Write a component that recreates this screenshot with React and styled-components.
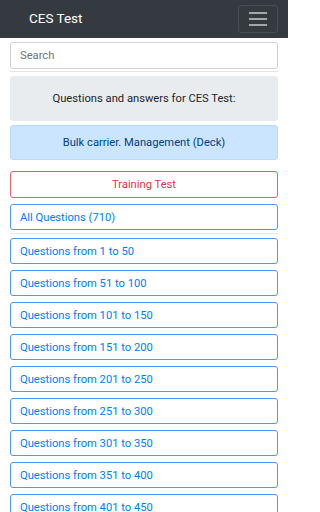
import React from 'react';
import styled, { createGlobalStyle } from 'styled-components';

const GlobalStyle = createGlobalStyle`
  html, body {
    margin: 0;
    padding: 0;
    background: #fff;
    font-family: Roboto, "Liberation Sans", sans-serif;
    color: #212529;
  }
  ::-webkit-scrollbar {
    display: none;
  }
`;

const Page = styled.div`
  width: 288px;
  overflow: hidden;
`;

const Navbar = styled.nav`
  display: flex;
  align-items: center;
  justify-content: space-between;
  height: 38px;
  padding: 0 10px 0 29px;
  background: #343a40;
`;

const Brand = styled.span`
  color: #fff;
  font-size: 13.5px;
  line-height: 1;
`;

const Toggler = styled.button`
  display: flex;
  flex-direction: column;
  justify-content: center;
  gap: 4.6px;
  align-items: center;
  width: 40px;
  height: 28px;
  padding: 0;
  background: transparent;
  border: 1px solid rgba(255, 255, 255, 0.1);
  border-radius: 3px;
  span {
    display: block;
    width: 18px;
    height: 1.4px;
    background: rgba(255, 255, 255, 0.55);
  }
`;

const Main = styled.main`
  display: flex;
  flex-direction: column;
  padding: 4px 10px 0;
`;

const SearchInput = styled.input`
  box-sizing: border-box;
  height: 27px;
  width: 100%;
  padding: 0 9px;
  border: 1px solid #ced4da;
  border-radius: 3px;
  font-family: inherit;
  font-size: 11.2px;
  color: #495057;
  &::placeholder {
    color: #6c757d;
  }
`;

const Rule = styled.hr`
  width: 100%;
  margin: ${p => p.$top}px 0 ${p => p.$bottom}px;
  border: 0;
  border-top: 1px solid rgba(0, 0, 0, 0.1);
`;

const Jumbo = styled.div`
  display: flex;
  align-items: center;
  justify-content: center;
  height: 45px;
  background: #e9ecef;
  border-radius: 3px;
  font-size: 11.2px;
  color: #212529;
`;

const Alert = styled.div`
  box-sizing: border-box;
  display: flex;
  align-items: center;
  justify-content: center;
  height: 35px;
  margin-top: 4px;
  background: #cce5ff;
  border: 1px solid #b8daff;
  border-radius: 3px;
  font-size: 11.2px;
  color: #004085;
`;

const OutlineButton = styled.button`
  box-sizing: border-box;
  display: flex;
  align-items: center;
  justify-content: ${p => (p.$center ? 'center' : 'flex-start')};
  width: 100%;
  height: ${p => p.$h || 26}px;
  margin-top: ${p => p.$mt ?? 6}px;
  padding: 0 9px;
  background: #fff;
  border: 1px solid ${p => (p.$danger ? '#e4606d' : '#4d95ff')};
  border-radius: 3px;
  font-family: inherit;
  font-size: 11.2px;
  color: ${p => (p.$danger ? '#dc3545' : '#007bff')};
`;

const ranges = [
  [1, 50], [51, 100], [101, 150], [151, 200], [201, 250],
  [251, 300], [301, 350], [351, 400], [401, 450],
];

export default function App() {
  return (
    <Page>
      <GlobalStyle />
      <Navbar>
        <Brand>CES Test</Brand>
        <Toggler aria-label="menu">
          <span />
          <span />
          <span />
        </Toggler>
      </Navbar>
      <Main>
        <SearchInput placeholder="Search" />
        <Rule $top={2} $bottom={4} />
        <Jumbo>Questions and answers for CES Test:</Jumbo>
        <Alert>Bulk carrier. Management (Deck)</Alert>
        <OutlineButton $danger $center $h={27} $mt={11}>Training Test</OutlineButton>
        <OutlineButton>All Questions (710)</OutlineButton>
        <Rule $top={3} $bottom={4} />
        {ranges.map(([a, b], i) => (
          <OutlineButton key={a} $mt={i === 0 ? 0 : 6}>
            Questions from {a} to {b}
          </OutlineButton>
        ))}
      </Main>
    </Page>
  );
}
